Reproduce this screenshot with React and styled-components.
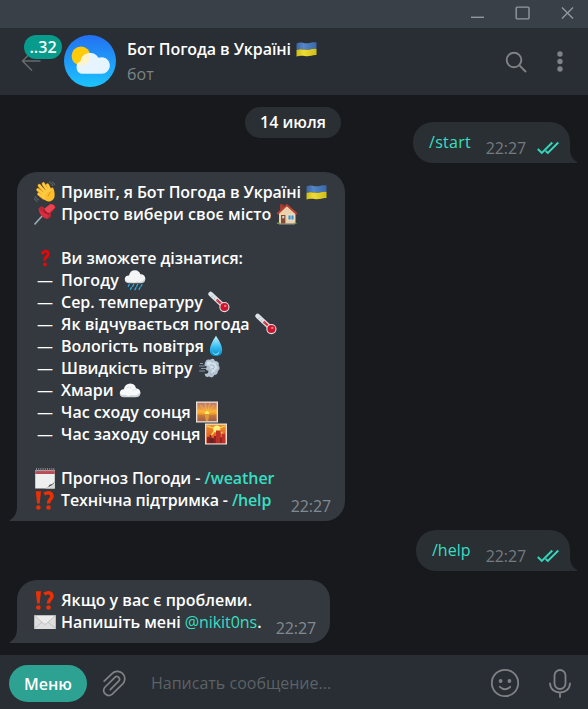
import React from "react";
import styled, { createGlobalStyle } from "styled-components";

const c = {
  title: "#3a4047",
  panel: "#282e33",
  chat: "#18191d",
  incoming: "#33393f",
  outgoing: "#2a2f33",
  link: "#37dfc2",
  icon: "#808285",
};

const Global = createGlobalStyle`
  * { box-sizing: border-box; }
  body { margin: 0; background: ${c.chat}; }
`;

const Window = styled.div`
  width: 588px;
  height: 709px;
  display: flex;
  flex-direction: column;
  overflow: hidden;
  background: ${c.chat};
  font: 400 16px/22px "Open Sans", sans-serif;
  color: #fff;
  svg { display: block; }
`;

const TitleBar = styled.div`
  height: 28px;
  flex: none;
  display: flex;
  justify-content: flex-end;
  background: ${c.title};
`;

const Header = styled.header`
  height: 67px;
  flex: none;
  display: flex;
  align-items: flex-start;
  background: ${c.panel};
`;

const BackArea = styled.div`
  position: relative;
  width: 64px;
  height: 67px;
  padding: 23px 0 0 21px;
`;

const Badge = styled.span`
  position: absolute;
  left: 24px;
  top: 7px;
  width: 38px;
  height: 24px;
  border-radius: 12px;
  background: #069b8b;
  font-weight: 600;
  line-height: 24px;
  text-align: center;
`;

const AvatarBox = styled.div`
  padding-top: 7px;
  width: 63px;
`;

const Titles = styled.div`
  flex: 1;
  padding-top: 10px;
`;

const Name = styled.div`
  height: 25px;
  display: flex;
  font-weight: 600;
  letter-spacing: -0.09px;
  white-space: pre;
`;

const Status = styled.div`
  color: #7c8286;
`;

const Chat = styled.main`
  position: relative;
  flex: 1;
  display: flex;
  flex-direction: column;
  gap: 9px;
  padding: 27px 18px 12px 17px;
`;

const DatePill = styled.div`
  position: absolute;
  left: 245px;
  top: 12px;
  width: 96px;
  height: 31px;
  border-radius: 16px;
  background: ${c.outgoing};
  font-weight: 600;
  line-height: 30px;
  text-align: center;
`;

const Bubble = styled.div`
  position: relative;
  display: grid;
  flex: none;
  width: ${(p) => p.$width}px;
  height: ${(p) => p.$height}px;
  align-self: ${(p) => (p.$out ? "flex-end" : "flex-start")};
  background: ${(p) => (p.$out ? c.outgoing : c.incoming)};
  border-radius: ${(p) => (p.$out ? "20px 20px 0 20px" : "20px 20px 20px 0")};
`;

const TailSlot = styled.span`
  position: absolute;
  bottom: 0;
  ${(p) => (p.$out ? "right: -7px; transform: scaleX(-1);" : "left: -7px;")}
  color: ${(p) => (p.$out ? c.outgoing : c.incoming)};
`;

const Body = styled.div`
  grid-area: 1 / 1;
  padding: 9px 0 0 ${(p) => (p.$regular ? 16 : 17)}px;
  font-weight: ${(p) => (p.$regular ? 400 : 600)};
  letter-spacing: ${(p) => p.$spacing || 0}px;
`;

const Line = styled.div`
  height: 22px;
  display: flex;
  white-space: pre;
  letter-spacing: ${(p) => p.$spacing || 0}px;
`;

const Dash = styled.span`
  width: 27px;
  padding-left: 3px;
  font-weight: 400;
`;

const Emoji = styled.span`
  width: 22px;
  height: 22px;
  flex: none;
  margin-left: ${(p) => (p.$lead ? 0 : 1)}px;
  margin-right: ${(p) => (p.$lead ? 1 : 0)}px;
`;

const Link = styled.span`
  color: ${c.link};
  font-weight: ${(p) => (p.$regular ? 400 : "inherit")};
`;

const Meta = styled.div`
  grid-area: 1 / 1;
  align-self: end;
  justify-self: end;
  display: flex;
  gap: 11px;
  padding: 0 ${(p) => (p.$out ? 11 : 14)}px 4px 0;
  letter-spacing: -0.1px;
  color: ${(p) => (p.$out ? "#737b80" : "#828a91")};
`;

const Composer = styled.footer`
  height: 54px;
  flex: none;
  display: flex;
  align-items: flex-start;
  background: ${c.panel};
`;

const MenuButton = styled.button`
  width: 78px;
  height: 37px;
  margin: 10px 15px 0 9px;
  padding: 0;
  border: 0;
  border-radius: 19px;
  background: #2da192;
  color: #fff;
  font: 600 16px/36px "Open Sans", sans-serif;
`;

const Placeholder = styled.div`
  flex: 1;
  padding: 17px 0 0 23px;
  color: #5c6266;
`;

const emojiArt = {
  flag: (
    <>
      <defs>
        <linearGradient id="flagB" x2="1" y2="0">
          <stop stopColor="#3c669f" /><stop offset=".35" stopColor="#5586c8" /><stop offset="1" stopColor="#3a67a8" />
        </linearGradient>
        <linearGradient id="flagY" x2="1" y2="0">
          <stop stopColor="#cdbb1a" /><stop offset=".35" stopColor="#eedb35" /><stop offset="1" stopColor="#cfbd1a" />
        </linearGradient>
      </defs>
      <path d="M.5 5.5C5 3.2 8 5.8 12 5.2S17 3.8 20.5 4.5V11C17 10 14 12 10 11.8S4 10.8 .5 12Z" fill="url(#flagB)" />
      <path d="M.5 12C4 10.8 6 11.6 10 11.8S17 10 20.5 11V17C17 16.5 14 18.6 10 18.2S4 17.2 .5 18.5Z" fill="url(#flagY)" />
    </>
  ),
  wave: (
    <>
      <g fill="none" stroke="#e09a20" strokeWidth="3.3" strokeLinecap="round">
        <path d="M10 14L3.9 8.7M11 11.5L5.3 4.6M13.5 9.5L9.3 2.8M16 9L13.5 4M9.5 17L4.8 13" />
      </g>
      <path d="M8 12L14 7.5L16.8 9.3Q16 7.3 18.2 6.2Q20 7 20.3 10.5Q21.7 16.5 18.3 19.3Q14.3 22 10.5 18.8L7.6 16Z" fill="#fcbe2c" />
      <g fill="none" stroke="#ffcb43" strokeWidth="2.3" strokeLinecap="round">
        <path d="M10.5 14L3.9 8.7M12 12L5.3 4.6M14 10.5L9.3 2.8M16 9.5L13.5 4M10.5 17L4.8 13" />
      </g>
      <path d="M14.4 15.2Q14 12.1 17.5 10.4" fill="none" stroke="#dc9218" strokeWidth=".8" />
      <path d="M15 .8Q18.2 2 19 5M17.8.6Q20 1.8 20.8 4M1.1 15Q1.7 18 5 19.2M.2 17.2Q1.2 19.8 3.5 20.7" fill="none" stroke="#687078" strokeWidth=".9" />
    </>
  ),
  pin: (
    <>
      <path d="M.5 21.5L9.5 11.5" stroke="#98a9b3" strokeWidth="1.6" />
      <path d="M4.5 5.5Q8 1 11 6L16 1.2Q21 .5 21.5 5L16.5 10.5Q18.5 14.5 13.5 16Q5 14 4.5 5.5Z" fill="#bd2635" />
      <path d="M10 6L16 1.2Q20 1 21 4.5L14 11Z" fill="#ea4351" />
      <path d="M4.8 5Q8 10 14.5 12L13.3 16Q5 13.5 4.8 5Z" fill="#d92e3f" />
      <path d="M10.3 6.5Q11 10.3 15 10.6" fill="none" stroke="#8f1726" strokeWidth="1.1" />
    </>
  ),
  question: (
    <g transform="translate(.2 0)">
      <path d="M8.6 5.6Q13.4 2.3 14 6.5Q14 8.8 11.3 10.7Q10.6 11.3 10.6 13.8" fill="none" stroke="#e30909" strokeWidth="2.9" />
      <circle cx="8.6" cy="5.9" r="1.7" fill="#e30909" />
      <circle cx="10.7" cy="17.6" r="2" fill="#e30909" />
    </g>
  ),
  interrobang: (
    <>
      <path d="M1.8 2.3H7L5.7 14.5H3.1Z" fill="#ed2f06" />
      <circle cx="4.4" cy="18.5" r="2.3" fill="#ed2f06" />
      <path d="M10.2 5Q14.5 2.6 17 4.7Q19.2 7.4 16.5 10.2Q14.4 12 14.4 14.6" fill="none" stroke="#ed2f06" strokeWidth="3.5" />
      <circle cx="14.5" cy="18.5" r="2.3" fill="#ed2f06" />
    </>
  ),
  rain: (
    <>
      <path d="M5 14Q.5 13.8.8 9.8Q1.3 6.4 5 6.5Q6.2.9 11.4 1.2Q15 1.5 16.4 5.2Q21 5 21.3 9.7Q21 14 16.6 14Z" fill="#f2f4f6" />
      <path d="M1 10Q2 14 6 12.7Q10 14.2 13 12.5Q18 14 21.3 9.5Q21.3 14 16.6 14.2H5Q1 14 1 10Z" fill="#ccd1d6" />
      <path d="M5.2 15.5L4.3 17.2M9.6 15.5L8.6 17.4M13.7 15.5L12.7 17.3M18 15.5L17 17.3M7.4 18.6L6.5 20.3M12 18.6L11 20.6M16 18.6L15 20.3" stroke="#29ade8" strokeWidth="1.3" strokeLinecap="round" />
    </>
  ),
  thermometer: (
    <>
      <path d="M2.6 3L16 15.5" stroke="#dce2e6" strokeWidth="4.6" strokeLinecap="round" />
      <path d="M8.6 8.6L16 15.5" stroke="#d92b40" strokeWidth="2.2" />
      <circle cx="16.4" cy="16.1" r="5.1" fill="#dfe3e6" />
      <circle cx="16.4" cy="16.1" r="4" fill="#cc142c" />
      <circle cx="17.3" cy="14.9" r="1.2" fill="#f47783" />
      <path d="M3.4 6L5 4.4M5.8 8.3L7.3 6.7M8.2 10.6L9.7 9" stroke="#9ca5aa" strokeWidth=".7" />
    </>
  ),
  drop: (
    <>
      <defs><linearGradient id="drop" x2="0" y2="1"><stop stopColor="#c7f4ff" /><stop offset=".55" stopColor="#37bff0" /><stop offset="1" stopColor="#0786c7" /></linearGradient></defs>
      <path d="M11 .8Q17.2 10 17.2 15Q17 21.2 11 21.2T4.8 15Q4.8 10 11 .8Z" fill="url(#drop)" />
      <path d="M7.2 16.2Q10.7 22 14.5 16Q14 20 11 20Q8 19.5 7.2 16.2Z" fill="#78e4ff" />
    </>
  ),
  wind: (
    <>
      <path d="M7 6Q8 1.4 12 2.7Q15.8.3 17 4Q21.8 4.5 20.6 8.3Q23 12 19.8 14.2Q20 18 16.3 18Q14.8 21.8 11 19.6Q7 20.8 6.7 16.8Q10.5 17.3 10.4 13.7Q6.3 13.5 9 9.6Q5.5 9.5 7 6Z" fill="#b4c3d2" />
      <path d="M9 5Q12 3 14 6Q18 4 18 8Q21 11 17 13Q17 17 13 17Q15 13 12 12Q13 8 9 8Z" fill="#d3dfea" />
      <path d="M2 6.5H5M1 9H7M3 11.5H8M1.2 14H7" stroke="#8496a6" strokeWidth="1.1" />
      <path d="M12 8Q16 7 16.4 10Q16 13 12.8 12M12 17Q15 18 16 15" fill="none" stroke="#92a9be" strokeWidth=".8" />
    </>
  ),
  cloud: (
    <>
      <path d="M5 18Q.7 17.8.8 14Q1.2 10.2 4.8 10.3Q6 4.8 11.4 4.6Q16 5 17 9.2Q21 9.5 21.4 13.6Q21.2 18 16.8 18Z" fill="#f7f8f9" />
      <path d="M.8 14Q2.5 16.8 6 15.8Q9 18 12 16Q17.5 17.7 21.4 13.6Q21.4 18 16.8 18.3H5Q1 18 .8 14Z" fill="#d0d4d9" />
      <path d="M7 9.2Q10 6.5 12.5 9.5M13.5 12Q15 9.7 17.5 10.8" fill="none" stroke="#d8dce0" strokeWidth=".8" />
    </>
  ),
  sunrise: (
    <>
      <defs><linearGradient id="dawn" x2="0" y2="1"><stop stopColor="#bb7770" /><stop offset=".5" stopColor="#ffad2e" /><stop offset=".62" stopColor="#ef9728" /><stop offset=".68" stopColor="#c47a3a" /><stop offset="1" stopColor="#a35c48" /></linearGradient></defs>
      <path d="M0 .5H22V21.5H0Z" fill="#eadfd5" />
      <path d="M1.3 1.8H20.7V20.2H1.3Z" fill="url(#dawn)" />
      <path d="M11 12L2 9M11 12L4 4M11 12L9 2M11 12L14 2M11 12L18 4M11 12L20 9" stroke="#ffd04d" strokeWidth=".8" opacity=".6" />
      <path d="M8.6 13Q8.8 10.3 11 10.2Q13.2 10.3 13.4 13Z" fill="#fff074" />
      <path d="M8.8 14H13.2L12.2 20H9.8Z" fill="#f5b43b" opacity=".6" />
    </>
  ),
  sunset: (
    <>
      <defs><linearGradient id="dusk" x2="0" y2="1"><stop stopColor="#ef922c" /><stop offset="1" stopColor="#d84520" /></linearGradient></defs>
      <path d="M0 .5H22V21.5H0Z" fill="#eadfd5" />
      <path d="M1.3 1.8H20.7V20.2H1.3Z" fill="url(#dusk)" />
      <path d="M11 6L2 3M11 6L5 14M11 6L20 12M11 6L20 3" stroke="#ffd94d" strokeWidth="1.3" />
      <circle cx="11.8" cy="6" r="3.6" fill="#fff07b" />
      <path d="M2 20.2V14H4.5V12H6.5V15H9V13H11V20.2Z" fill="#8d2423" />
      <path d="M11 20.2V7.5H15.6V14H17V10.5H20V20.2Z" fill="#bd3129" />
      <path d="M5 20V16H8V20M16 20V15" stroke="#612022" fill="#742022" />
    </>
  ),
  calendar: (
    <>
      <path d="M1.2 3H20.8V21.5H1.2Z" fill="#eeefef" />
      <path d="M1.2 3.5H20.8V7H1.2Z" fill="#b94d55" />
      <path d="M2.5 1V4.5M4.7 1V4.5M6.9 1V4.5M9.1 1V4.5M11.3 1V4.5M13.5 1V4.5M15.7 1V4.5M17.9 1V4.5M19.8 1V4.5" stroke="#8b9094" strokeWidth=".9" />
      <path d="M10 21.5Q17 21 20.8 15V21.5Z" fill="#d5d7d8" />
      <path d="M11.5 21Q15 20 15.6 17.8Q19 17.5 20.8 14.5Q19.5 18.6 11.5 21Z" fill="#42474b" />
    </>
  ),
  house: (
    <>
      <path d="M3 9L11 2L19.5 9V20.7H3Z" fill="#ead2ad" />
      <path d="M4 1.2H7.5V6L4 9Z" fill="#a73b32" />
      <path d="M1.3 11L10.8 2L20.8 11" fill="none" stroke="#b93f34" strokeWidth="2" />
      <path d="M5 12H9.4V20.8H5Z" fill="#844a32" />
      <path d="M6.2 13H8.3V15.3H6.2Z" fill="#c9dae1" />
      <path d="M12 12H18V17H12Z" fill="#428fc2" stroke="#f1eadc" strokeWidth=".8" />
      <path d="M15 12V17" stroke="#e9e5d9" strokeWidth=".8" />
      <path d="M.8 21Q1 18.5 3.4 19.5L4.2 21ZM17.5 21Q18.5 18.3 21.2 21Z" fill="#67963d" />
      <path d="M3 21H19" stroke="#9a9489" />
    </>
  ),
  envelope: (
    <>
      <path d="M.2 4.3H21.8V18H.2Z" fill="#dedede" />
      <path d="M.6 17.6L8.5 10.5M21.4 17.6L13.5 10.5" stroke="#b7b7b7" strokeWidth=".8" />
      <path d="M.6 4.5L9.5 12.7Q11 14 12.5 12.7L21.4 4.5Z" fill="#ebebeb" stroke="#b8b8b8" strokeWidth=".8" />
    </>
  ),
};

const E = ({ name, lead }) => (
  <Emoji $lead={lead}>
    <svg width="22" height="22" viewBox="0 0 22 22">{emojiArt[name]}</svg>
  </Emoji>
);

const Tail = ({ out }) => (
  <TailSlot $out={out}>
    <svg width="8" height="14" viewBox="0 0 8 14">
      <path d="M8 0V14H0V13Q7 9 7 0Z" fill="currentColor" />
    </svg>
  </TailSlot>
);

const Outgoing = ({ width, spacing, text }) => (
  <Bubble $out $width={width} $height={41}>
    <Tail out />
    <Body $regular $spacing={spacing}><Link>{text}</Link></Body>
    <Meta $out>
      22:27
      <svg width="22" height="22" viewBox="0 0 22 22" fill="none" stroke="#35d9bd" strokeWidth="1.9">
        <path d="M.8 12L4.8 16L15.3 5.5M8.7 14L10.8 16L21.3 5.5" />
      </svg>
    </Meta>
  </Bubble>
);

const topics = [
  ["Погоду ", "rain", 0.15],
  ["Сер. температуру ", "thermometer"],
  ["Як відчувається погода ", "thermometer"],
  ["Вологість повітря", "drop"],
  ["Швидкість вітру ", "wind"],
  ["Хмари ", "cloud"],
  ["Час сходу сонця ", "sunrise"],
  ["Час заходу сонця ", "sunset"],
];

const WindowControls = () => (
  <svg width="124" height="28" viewBox="464 0 124 28" fill="none" stroke="#9298a0" strokeWidth="1.4">
    <path d="M471 17.3H484" />
    <rect x="516.2" y="7.1" width="12.8" height="11.8" rx="1" />
    <path d="M562 7.5L573 18.5M573 7.5L562 18.5" />
  </svg>
);

const Avatar = () => (
  <svg width="52" height="52" viewBox="0 0 52 52">
    <defs>
      <linearGradient id="sky" x2="0" y2="1"><stop stopColor="#2370f1" /><stop offset="1" stopColor="#1cc4ff" /></linearGradient>
      <clipPath id="sunClip"><circle cx="17" cy="21" r="9.4" /></clipPath>
    </defs>
    <circle cx="26" cy="26" r="26" fill="url(#sky)" />
    <circle cx="17" cy="21" r="9.4" fill="#ffcb0a" />
    <path d="M18.5 38.8A6.4 6.4 0 0 1 16.5 26.5A9.7 9.7 0 0 1 34.5 22.8A8.3 8.3 0 1 1 36.8 38.8Z" fill="#e5f4ff" />
    <path clipPath="url(#sunClip)" d="M18.5 38.8A6.4 6.4 0 0 1 16.5 26.5A9.7 9.7 0 0 1 34.5 22.8A8.3 8.3 0 1 1 36.8 38.8Z" fill="#fff3c9" />
  </svg>
);

export default function App() {
  return (
    <Window>
      <Global />
      <TitleBar><WindowControls /></TitleBar>
      <Header>
        <BackArea>
          <svg width="20" height="22" viewBox="0 0 20 22" fill="none" stroke="#666a6d" strokeWidth="1.5">
            <path d="M19.5 10H1.5M11 .5L1.5 10L11 19.5" />
          </svg>
          <Badge>..32</Badge>
        </BackArea>
        <AvatarBox><Avatar /></AvatarBox>
        <Titles>
          <Name>Бот Погода в Україні <E name="flag" /></Name>
          <Status>бот</Status>
        </Titles>
        <svg width="88" height="67" viewBox="500 28 88 67" fill="none" stroke={c.icon} strokeWidth="1.9">
          <circle cx="514" cy="60" r="7.3" />
          <path d="M519.2 65.2L526 72" />
          <g fill={c.icon} stroke="none">
            <circle cx="560" cy="54" r="2.7" /><circle cx="560" cy="61.5" r="2.7" /><circle cx="560" cy="69" r="2.7" />
          </g>
        </svg>
      </Header>

      <Chat>
        <DatePill>14 июля</DatePill>
        <Outgoing width={157} spacing={0.3} text="/start" />

        <Bubble $width={328} $height={349}>
          <Tail />
          <Body>
            <Line $spacing={-0.09}><E lead name="wave" /> Привіт, я Бот Погода в Україні <E name="flag" /></Line>
            <Line $spacing={0.06}><E lead name="pin" /> Просто вибери своє місто <E name="house" /></Line>
            <Line />
            <Line $spacing={-0.05}><E lead name="question" /> Ви зможете дізнатися:</Line>
            {topics.map(([text, icon, spacing]) => (
              <Line key={text} $spacing={spacing}><Dash>—</Dash>{text}<E name={icon} /></Line>
            ))}
            <Line />
            <Line $spacing={-0.05}><E lead name="calendar" /> Прогноз Погоди - <Link>/weather</Link></Line>
            <Line $spacing={-0.14}><E lead name="interrobang" /> Технічна підтримка - <Link>/help</Link></Line>
          </Body>
          <Meta>22:27</Meta>
        </Bubble>

        <Outgoing width={154} text="/help" />

        <Bubble $width={313} $height={63}>
          <Tail />
          <Body>
            <Line><E lead name="interrobang" /> Якщо у вас є проблеми.</Line>
            <Line $spacing={-0.06}><E lead name="envelope" /> Напишіть мені <Link $regular>@nikit0ns</Link>.</Line>
          </Body>
          <Meta>22:27</Meta>
        </Bubble>
      </Chat>

      <Composer>
        <MenuButton>Меню</MenuButton>
        <svg width="26" height="54" viewBox="102 655 26 54" fill="none" stroke={c.icon} strokeWidth="1.7" strokeLinecap="round">
          <path d="M104.2 681.2L111.8 673.9A7.3 7.3 0 0 1 123 683.6L112 694.4A5.1 5.1 0 0 1 104.9 687.2L114.9 677.4A2.6 2.6 0 0 1 118.7 681.1L110.3 689.6" />
        </svg>
        <Placeholder>Написать сообщение...</Placeholder>
        <svg width="108" height="54" viewBox="480 655 108 54" fill="none" stroke={c.icon} strokeWidth="1.8" strokeLinecap="round">
          <circle cx="505" cy="683" r="13.2" />
          <circle cx="500.6" cy="681" r="1.9" fill={c.icon} stroke="none" />
          <circle cx="509.4" cy="681" r="1.9" fill={c.icon} stroke="none" />
          <path d="M499.8 686.8Q505 691.6 510.2 686.8" />
          <rect x="554.5" y="670" width="11" height="19" rx="5.5" />
          <path d="M550 683.5C550.5 695.5 569.5 695.5 570 683.5M560 692.8V697" />
        </svg>
      </Composer>
    </Window>
  );
}
